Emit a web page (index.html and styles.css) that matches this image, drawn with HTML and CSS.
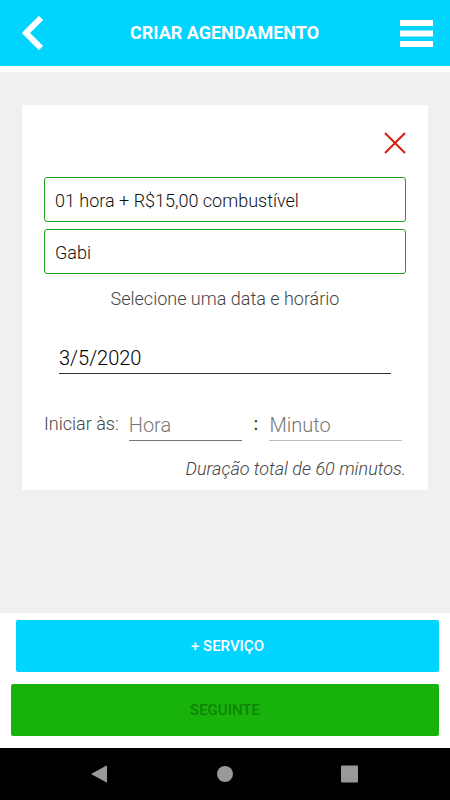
FILE: index.html
```
<!doctype html>
<html lang="pt-BR">

<head>
	<meta charset="utf-8">
	<meta name="viewport" content="width=device-width, initial-scale=1">
	<title>Criar agendamento</title>
	<link rel="stylesheet" href="styles.css">
</head>

<body>
	<header class="topbar">
		<button type="button" class="icon-btn" aria-label="Voltar">
			<svg width="22" height="34" viewBox="0 0 22 34"><path d="M19 2L4 17L19 32" fill="none" stroke="#fff" stroke-width="6"/></svg>
		</button>
		<h1>CRIAR AGENDAMENTO</h1>
		<button type="button" class="icon-btn" aria-label="Menu">
			<svg width="33" height="27" viewBox="0 0 33 27" fill="#fff"><rect width="33" height="6"/><rect y="10.500" width="33" height="6"/><rect y="21" width="33" height="6"/></svg>
		</button>
	</header>

	<main>
		<form class="card" id="agendamento">
			<button type="button" class="close" aria-label="Remover">
				<svg width="22" height="22" viewBox="0 0 22 22"><path d="M1 1L21 21M21 1L1 21" stroke="#d81e0c" stroke-width="2"/></svg>
			</button>
			<input class="field" type="text" aria-label="Serviço" value="01 hora + R$15,00 combustível">
			<input class="field" type="text" aria-label="Profissional" value="Gabi">
			<p class="hint">Selecione uma data e horário</p>
			<input class="line date" type="text" aria-label="Data" value="3/5/2020">
			<div class="time">
				<label for="hora">Iniciar às:</label>
				<input class="line hour" type="text" id="hora" placeholder="Hora">
				<span class="colon">:</span>
				<input class="line minute" type="text" aria-label="Minuto" placeholder="Minuto">
			</div>
			<p class="total">Duração total de 60 minutos.</p>
		</form>
	</main>

	<div class="actions">
		<button type="button" class="btn add">+ SERVIÇO</button>
		<button type="submit" form="agendamento" class="btn next" disabled>SEGUINTE</button>
	</div>

	<nav class="system">
		<button type="button" aria-label="Voltar">
			<svg width="18" height="18" viewBox="0 0 18 18"><path d="M0 9L15.500 .5Q16 .3 16 1V17Q16 17.700 15.500 17.500Z" fill="#999"/></svg>
		</button>
		<button type="button" aria-label="Início">
			<svg width="18" height="18" viewBox="0 0 18 18"><circle cx="9" cy="9" r="8" fill="#999"/></svg>
		</button>
		<button type="button" aria-label="Recentes">
			<svg width="18" height="18" viewBox="0 0 18 18"><rect x="0" y=".5" width="17" height="17" rx="1" fill="#999"/></svg>
		</button>
	</nav>
</body>

</html>
```
FILE: styles.css
```
* {
	margin: 0;
	padding: 0;
	box-sizing: border-box;
}

body {
	display: flex;
	flex-direction: column;
	min-height: 100vh;
	background: #fff;
	color: #444;
	font: 300 18px/24px Roboto, sans-serif;
}

button {
	border: 0;
	background: none;
	font: inherit;
	cursor: pointer;
}

svg {
	display: block;
}

/* header */
.topbar {
	display: flex;
	align-items: center;
	justify-content: space-between;
	height: 66px;
	padding: 0 17px 0 22px;
	background: #00d4ff;
}

.topbar h1 {
	padding-right: 6px;
	font-size: 18px;
	font-weight: bold;
	color: #fff;
}

.icon-btn {
	display: flex;
	width: 33px;
}

main {
	flex: 1;
	margin-top: 6px;
	padding: 33px 22px;
	background: #f0f0f0;
}

/* card */
.card {
	display: flex;
	flex-direction: column;
	padding: 27px 22px 9px;
	background: #fff;
}

.close {
	align-self: flex-end;
	margin-bottom: 23px;
}

.field {
	width: 100%;
	height: 45px;
	margin-bottom: 7px;
	padding: 2px 10px 0;
	border: 1px solid #1fa31f;
	border-radius: 3px;
	background: #fff;
	color: #111;
	font: 300 18px Roboto, sans-serif;
}

.hint {
	margin-top: 6px;
	text-align: center;
}

.line {
	min-width: 0;
	height: 34px;
	padding-top: 3px;
	border: 0;
	border-bottom: 1px solid #777;
	background: none;
	color: #000;
	font: 300 20px Roboto, sans-serif;
}

.line::placeholder {
	color: #777;
	opacity: 1;
}

.date {
	margin: 29px 15px 0;
	border-color: #333;
}

.time {
	display: flex;
	align-items: center;
	margin: 33px 4px 0 0;
}

.time label {
	margin-right: 10px;
}

.hour {
	flex: 114;
}

.colon {
	width: 27px;
	text-align: center;
	font-weight: 500;
}

.minute {
	flex: 133;
	border-color: #bbb;
}

.total {
	margin-top: 16px;
	text-align: right;
	font-style: italic;
}

/* bottom buttons */
.actions {
	display: flex;
	flex-direction: column;
	gap: 12px;
	padding: 7px 11px 12px;
}

.btn {
	height: 52px;
	border-radius: 2px;
	font-size: 15px;
	font-weight: 500;
}

.add {
	margin-left: 5px;
	background: #00d4ff;
	color: #fff;
}

.next {
	background: #17b30b;
	color: #108408;
}

.system {
	display: flex;
	justify-content: center;
	align-items: center;
	gap: 107px;
	height: 52px;
	background: #000;
}
```
